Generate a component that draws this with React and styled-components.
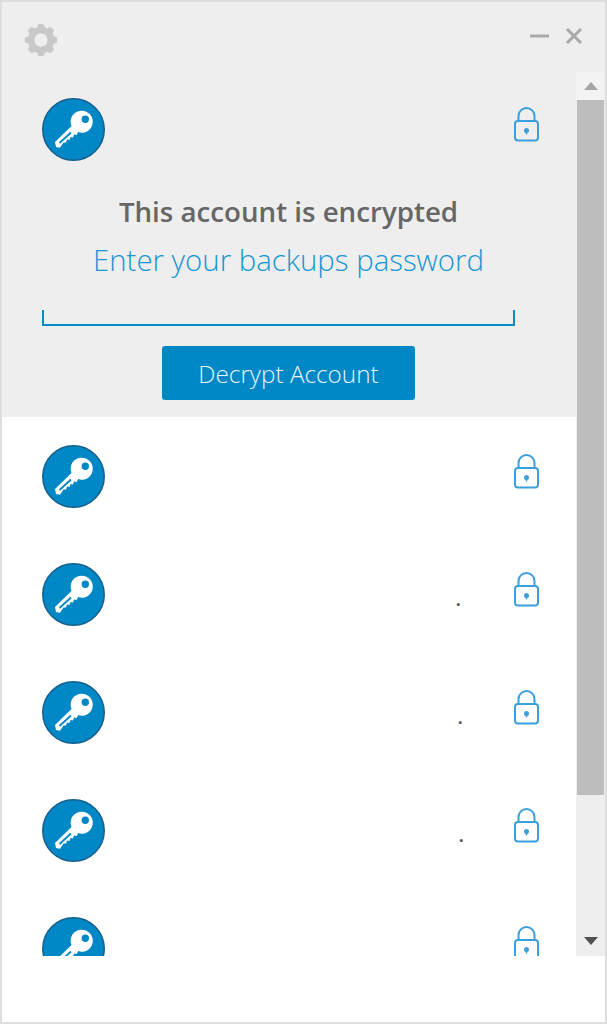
import React from 'react';
import styled, { createGlobalStyle } from 'styled-components';

const GlobalStyle = createGlobalStyle`
    html, body {
        margin: 0;
        padding: 0;
        background: #fff;
    }
    * {
        box-sizing: border-box;
    }
`;

const Window = styled.div`
    width: 607px;
    height: 1024px;
    display: flex;
    flex-direction: column;
    background: #fff;
    border: 2px solid #ddd;
    font-family: 'Open Sans', sans-serif;
`;

const TitleBar = styled.div`
    height: 70px;
    flex: none;
    display: flex;
    align-items: center;
    justify-content: space-between;
    padding: 6px 22px 0 21px;
    background: #eee;
`;

const WindowButtons = styled.div`
    display: flex;
    align-items: center;
    gap: 15px;
    padding-bottom: 8px;
`;

const Body = styled.div`
    height: 884px;
    flex: none;
    display: flex;
`;

const List = styled.div`
    width: 574px;
    flex: none;
    overflow: hidden;
`;

const Panel = styled.div`
    height: 345px;
    padding: 26px 37px 0 40px;
    background: #eee;
`;

const PanelTop = styled.div`
    display: flex;
    align-items: flex-start;
    justify-content: space-between;
`;

const Form = styled.div`
    width: 493px;
`;

const Title = styled.div`
    margin-top: 32px;
    text-align: center;
    font-size: 27.7px;
    line-height: 37px;
    font-weight: 600;
    color: #666;
`;

const Subtitle = styled.div`
    margin-top: 10px;
    text-align: center;
    font-size: 29.4px;
    line-height: 41px;
    font-weight: 300;
    color: #1796d4;
`;

const PasswordField = styled.input`
    display: block;
    width: 473px;
    height: 16px;
    margin: 29px 0 0 0;
    padding: 0;
    background: transparent;
    outline: none;
    border: 0 solid #0a8ac6;
    border-width: 0 2px 2px 2px;
`;

const DecryptButton = styled.button`
    display: block;
    width: 253px;
    height: 54px;
    margin: 20px auto 0 auto;
    padding: 0;
    border: 0;
    border-radius: 3px;
    background: #0088c6;
    color: #e6f4fb;
    font-family: inherit;
    font-size: 24.3px;
    font-weight: 300;
`;

const Row = styled.div`
    height: 118px;
    flex: none;
    display: flex;
    align-items: flex-start;
    padding: 28px 37px 0 40px;
    background: #fff;
`;

const RowName = styled.div`
    flex: 1;
    height: 63px;
    padding-top: 21px;
    padding-right: ${(p) => p.$inset}px;
    text-align: right;
    font-size: 20px;
    font-weight: 600;
    line-height: 30px;
    color: #555;
`;

const LockSlot = styled.div`
    margin-top: 9px;
    line-height: 0;
`;

const Scrollbar = styled.div`
    width: 29px;
    flex: none;
    display: flex;
    flex-direction: column;
    background: #eee;
`;

const ScrollButton = styled.div`
    height: ${(p) => p.$height}px;
    flex: none;
    display: flex;
    align-items: center;
    justify-content: center;
    padding-bottom: ${(p) => p.$lift || 0}px;
    background: ${(p) => (p.$light ? '#f3f3f3' : '#eee')};
`;

const ScrollThumb = styled.div`
    height: 695px;
    flex: none;
    margin: 0 1px;
    background: #bdbdbd;
`;

const ScrollGap = styled.div`
    flex: 1;
`;

function GearIcon() {
    return (
        <svg width="36" height="36" viewBox="-1 -1 38 38">
            {[0, 45, 90, 135, 180, 225, 270, 315].map((deg) => (
                <rect
                    key={deg}
                    x="14.5"
                    y="1"
                    width="7"
                    height="8"
                    rx="2"
                    fill="#c8c8c8"
                    transform={`rotate(${deg} 18 18)`}
                />
            ))}
            <circle cx="18" cy="18" r="10.5" fill="none" stroke="#c8c8c8" strokeWidth="7" />
        </svg>
    );
}

function MinimizeIcon() {
    return (
        <svg width="20" height="4" viewBox="0 0 20 4">
            <rect x="0" y="0.5" width="19" height="3" fill="#a9a9a9" />
        </svg>
    );
}

function CloseIcon() {
    return (
        <svg width="18" height="18" viewBox="0 0 18 18">
            <path d="M2 2 L16 16 M16 2 L2 16" stroke="#a9a9a9" strokeWidth="3" fill="none" />
        </svg>
    );
}

function KeyAvatar() {
    return (
        <svg width="63" height="63" viewBox="0 0 63 63">
            <circle cx="31.5" cy="31.5" r="30.75" fill="#0088c6" stroke="#17608f" strokeWidth="1.5" />
            <path
                fill="#fff"
                fillRule="evenodd"
                d="M39.7 12.7a11 11 0 1 1-3.5 21.4L34.7 37l-2.7-.5-1 3-2.5-.5-1 3-2.5-.5-1 3-2.5 0L18 49.7l-4-.7-1-5L29.5 28A11 11 0 0 1 39.7 12.7Z M43.3 17.6a3.7 3.7 0 1 0 0 7.4 3.7 3.7 0 0 0 0-7.4Z"
            />
            <path d="M17.5 45 29 34.5" stroke="#0088c6" strokeWidth="1.8" fill="none" />
        </svg>
    );
}

function LockIcon() {
    return (
        <svg width="25" height="35" viewBox="0 0 25 35" fill="none">
            <path d="M4.5 14V9a8 8 0 0 1 16 0v5" stroke="#3b9fdc" strokeWidth="2" />
            <rect x="1" y="14" width="23" height="19.5" rx="3" stroke="#3b9fdc" strokeWidth="2" />
            <circle cx="12.5" cy="23.5" r="2.5" fill="#3b9fdc" />
            <path d="M11.5 24.5h2l-.4 3h-1.2Z" fill="#3b9fdc" />
        </svg>
    );
}

const rows = [
    { id: 1, name: '', inset: 0 },
    { id: 2, name: '.', inset: 53 },
    { id: 3, name: '.', inset: 51 },
    { id: 4, name: '.', inset: 50 },
    { id: 5, name: '', inset: 0 },
];

export default function App() {
    return (
        <Window>
            <GlobalStyle />
            <TitleBar>
                <GearIcon />
                <WindowButtons>
                    <MinimizeIcon />
                    <CloseIcon />
                </WindowButtons>
            </TitleBar>
            <Body>
                <List>
                    <Panel>
                        <PanelTop>
                            <KeyAvatar />
                            <LockSlot>
                                <LockIcon />
                            </LockSlot>
                        </PanelTop>
                        <Form>
                            <Title>This account is encrypted</Title>
                            <Subtitle>Enter your backups password</Subtitle>
                            <PasswordField type="password" />
                            <DecryptButton>Decrypt Account</DecryptButton>
                        </Form>
                    </Panel>
                    {rows.map((row) => (
                        <Row key={row.id}>
                            <KeyAvatar />
                            <RowName $inset={row.inset}>{row.name}</RowName>
                            <LockSlot>
                                <LockIcon />
                            </LockSlot>
                        </Row>
                    ))}
                </List>
                <Scrollbar>
                    <ScrollButton $height={28} $light>
                        <svg width="14" height="8" viewBox="0 0 14 8">
                            <path d="M7 0 L14 8 H0 Z" fill="#a5a5a5" />
                        </svg>
                    </ScrollButton>
                    <ScrollThumb />
                    <ScrollGap />
                    <ScrollButton $height={21} $lift={10}>
                        <svg width="14" height="8" viewBox="0 0 14 8">
                            <path d="M0 0 H14 L7 8 Z" fill="#505050" />
                        </svg>
                    </ScrollButton>
                </Scrollbar>
            </Body>
        </Window>
    );
}
